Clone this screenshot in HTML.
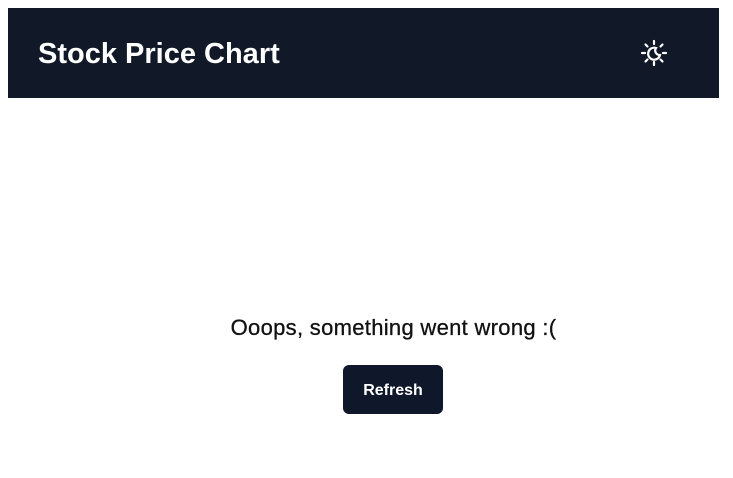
<!DOCTYPE html>
<html><head><style>
body{margin:0;width:733px;height:478px;background:#fff;font-family:"Liberation Sans",sans-serif;position:relative;overflow:hidden}
.hdr{position:absolute;left:8px;top:8px;width:711px;height:90px;background:#111827}
.t{position:absolute;left:30px;top:30px;color:#fff;font-weight:bold;font-size:29px;letter-spacing:0}
.ic{position:absolute;left:624px;top:23px}
.msg{position:absolute;left:0;width:787px;text-align:center;top:315px;font-size:22px;letter-spacing:0.3px;color:#111;-webkit-text-stroke:0.3px #111}
.btn{position:absolute;left:343px;top:365px;width:100px;height:49px;background:#0f172a;border-radius:6px;color:#fff;font-weight:bold;font-size:16px;text-align:center;line-height:51px}
</style></head><body>
<div class="hdr"><div class="t">Stock Price Chart</div>
<svg class="ic" width="44" height="44" viewBox="0 0 44 44" fill="none" stroke="#fff" stroke-width="2.2" stroke-linecap="round">
<path d="M22 10v3M22 31v3M10 22h3M31 22h3M13.5 13.5l2 2M28.5 28.5l2 2M13.5 30.5l2-2M28.5 15.5l2-2"/>
<path d="M24 17a6 6 0 1 0 4 7a4.5 4.5 0 0 1-4-7z"/>
</svg></div>
<div class="msg">Ooops, something went wrong :(</div>
<div class="btn">Refresh</div>
</body></html>
